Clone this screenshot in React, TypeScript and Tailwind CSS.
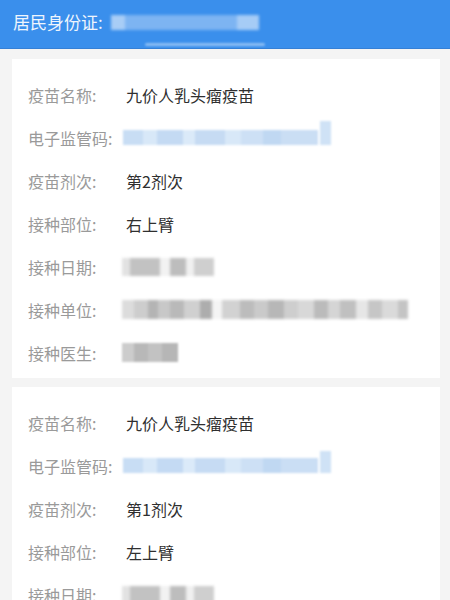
import React from "react";

const FONT = { fontFamily: '"Noto Sans CJK SC", "Noto Sans", sans-serif' };

function Row({ label, children }: { label: string; children: React.ReactNode }) {
  return (
    <div className="flex h-[43px] items-center">
      <div className="w-[98px] shrink-0 text-[16px] text-[#9a9a9a]">{label}</div>
      <div className="flex flex-1 items-center text-[16px] text-[#2f2f2f]">{children}</div>
    </div>
  );
}

function CodeBlob({ tall }: { tall?: boolean }) {
  return (
    <div className="relative flex h-[16px] w-[208px] items-center blur-[1.2px]">
      <div className="flex h-[15px] w-[195px] items-stretch bg-[#d3e5f7]">
        <div className="w-[20px] bg-[#c8ddf4]" />
        <div className="w-[14px] bg-[#d8e8f8]" />
        <div className="w-[26px] bg-[#c4daf3]" />
        <div className="w-[12px] bg-[#dbeaf9]" />
        <div className="w-[30px] bg-[#c6dbf3]" />
        <div className="w-[16px] bg-[#d8e8f8]" />
        <div className="w-[22px] bg-[#cde0f5]" />
        <div className="w-[18px] bg-[#c0d8f2]" />
        <div className="w-[37px] bg-[#cadef4]" />
      </div>
      <div className={`ml-[2px] w-[11px] bg-[#cfe2f6] ${tall ? "h-[22px] -mt-[7px]" : "h-[24px] -mt-[9px]"}`} />
    </div>
  );
}

function DateBlob() {
  return (
    <div className="flex h-[18px] w-[95px] items-stretch blur-[1.5px]">
      <div className="w-[8px] bg-[#e2e2e2]" />
      <div className="w-[30px] bg-[#c2c2c2]" />
      <div className="w-[10px] bg-[#f2f2f2]" />
      <div className="w-[16px] bg-[#bdbdbd]" />
      <div className="w-[8px] bg-[#f0f0f0]" />
      <div className="w-[20px] bg-[#cfcfcf]" />
    </div>
  );
}

function UnitBlob() {
  const shades = [
    "w-[12px] bg-[#dcdcdc]",
    "w-[14px] bg-[#cdcdcd]",
    "w-[10px] bg-[#b4b4b4]",
    "w-[12px] bg-[#c8c8c8]",
    "w-[14px] bg-[#b9b9b9]",
    "w-[16px] bg-[#d0d0d0]",
    "w-[12px] bg-[#adadad]",
    "w-[10px] bg-[#f4f4f4]",
    "w-[18px] bg-[#d2d2d2]",
    "w-[14px] bg-[#bcbcbc]",
    "w-[14px] bg-[#cacaca]",
    "w-[16px] bg-[#b7b7b7]",
    "w-[14px] bg-[#cecece]",
    "w-[16px] bg-[#d8d8d8]",
    "w-[14px] bg-[#bbbbbb]",
    "w-[12px] bg-[#d5d5d5]",
    "w-[16px] bg-[#c0c0c0]",
    "w-[12px] bg-[#e6e6e6]",
    "w-[14px] bg-[#c6c6c6]",
    "w-[16px] bg-[#dadada]",
    "w-[10px] bg-[#c4c4c4]",
  ];
  return (
    <div className="flex h-[19px] items-stretch blur-[1.5px]">
      {shades.map((c, i) => (
        <div key={i} className={c} />
      ))}
    </div>
  );
}

function DoctorBlob() {
  return (
    <div className="flex h-[19px] w-[56px] items-stretch blur-[1.2px]">
      <div className="w-[12px] bg-[#cccccc]" />
      <div className="w-[14px] bg-[#b8b8b8]" />
      <div className="w-[14px] bg-[#c2c2c2]" />
      <div className="w-[16px] bg-[#b6b6b6]" />
    </div>
  );
}

function Card({ dose, site, full }: { dose: string; site: string; full?: boolean }) {
  return (
    <div className="mr-[10px] ml-[12px] bg-white pt-[14px] pb-[4px] pl-[16px]">
      <Row label="疫苗名称:">九价人乳头瘤疫苗</Row>
      <Row label="电子监管码:">
        <div className="-ml-[3px]">
          <CodeBlob tall={!full} />
        </div>
      </Row>
      <Row label="疫苗剂次:">{dose}</Row>
      <Row label="接种部位:">{site}</Row>
      <Row label="接种日期:">
        <div className="-ml-[4px]">
          <DateBlob />
        </div>
      </Row>
      {full && (
        <>
          <Row label="接种单位:">
            <div className="-ml-[4px]">
              <UnitBlob />
            </div>
          </Row>
          <Row label="接种医生:">
            <div className="-ml-[4px]">
              <DoctorBlob />
            </div>
          </Row>
        </>
      )}
    </div>
  );
}

export default function App() {
  return (
    <div className="h-[600px] w-[450px] overflow-hidden bg-[#f4f4f4]" style={FONT}>
      <div className="relative h-[49px] border-b border-[#3580d6] bg-[#3a8fec]">
        <div className="flex h-[44px] items-center pl-[13px]">
          <span className="text-[17px] text-[#eef5fd]">居民身份证:</span>
          <div className="ml-[8px] flex h-[15px] w-[148px] items-stretch blur-[1.5px]">
            <div className="w-[14px] bg-[#a8cdf6]" />
            <div className="flex-1 bg-[#7db4f2]" />
            <div className="w-[22px] bg-[#a6ccf6]" />
          </div>
        </div>
        <div className="absolute top-[43px] left-[145px] h-[3px] w-[120px] rounded-full bg-[#8cbdf3] blur-[1px]" />
      </div>
      <div className="pt-[10px]">
        <Card dose="第2剂次" site="右上臂" full />
        <div className="h-[9px]" />
        <Card dose="第1剂次" site="左上臂" />
      </div>
    </div>
  );
}
